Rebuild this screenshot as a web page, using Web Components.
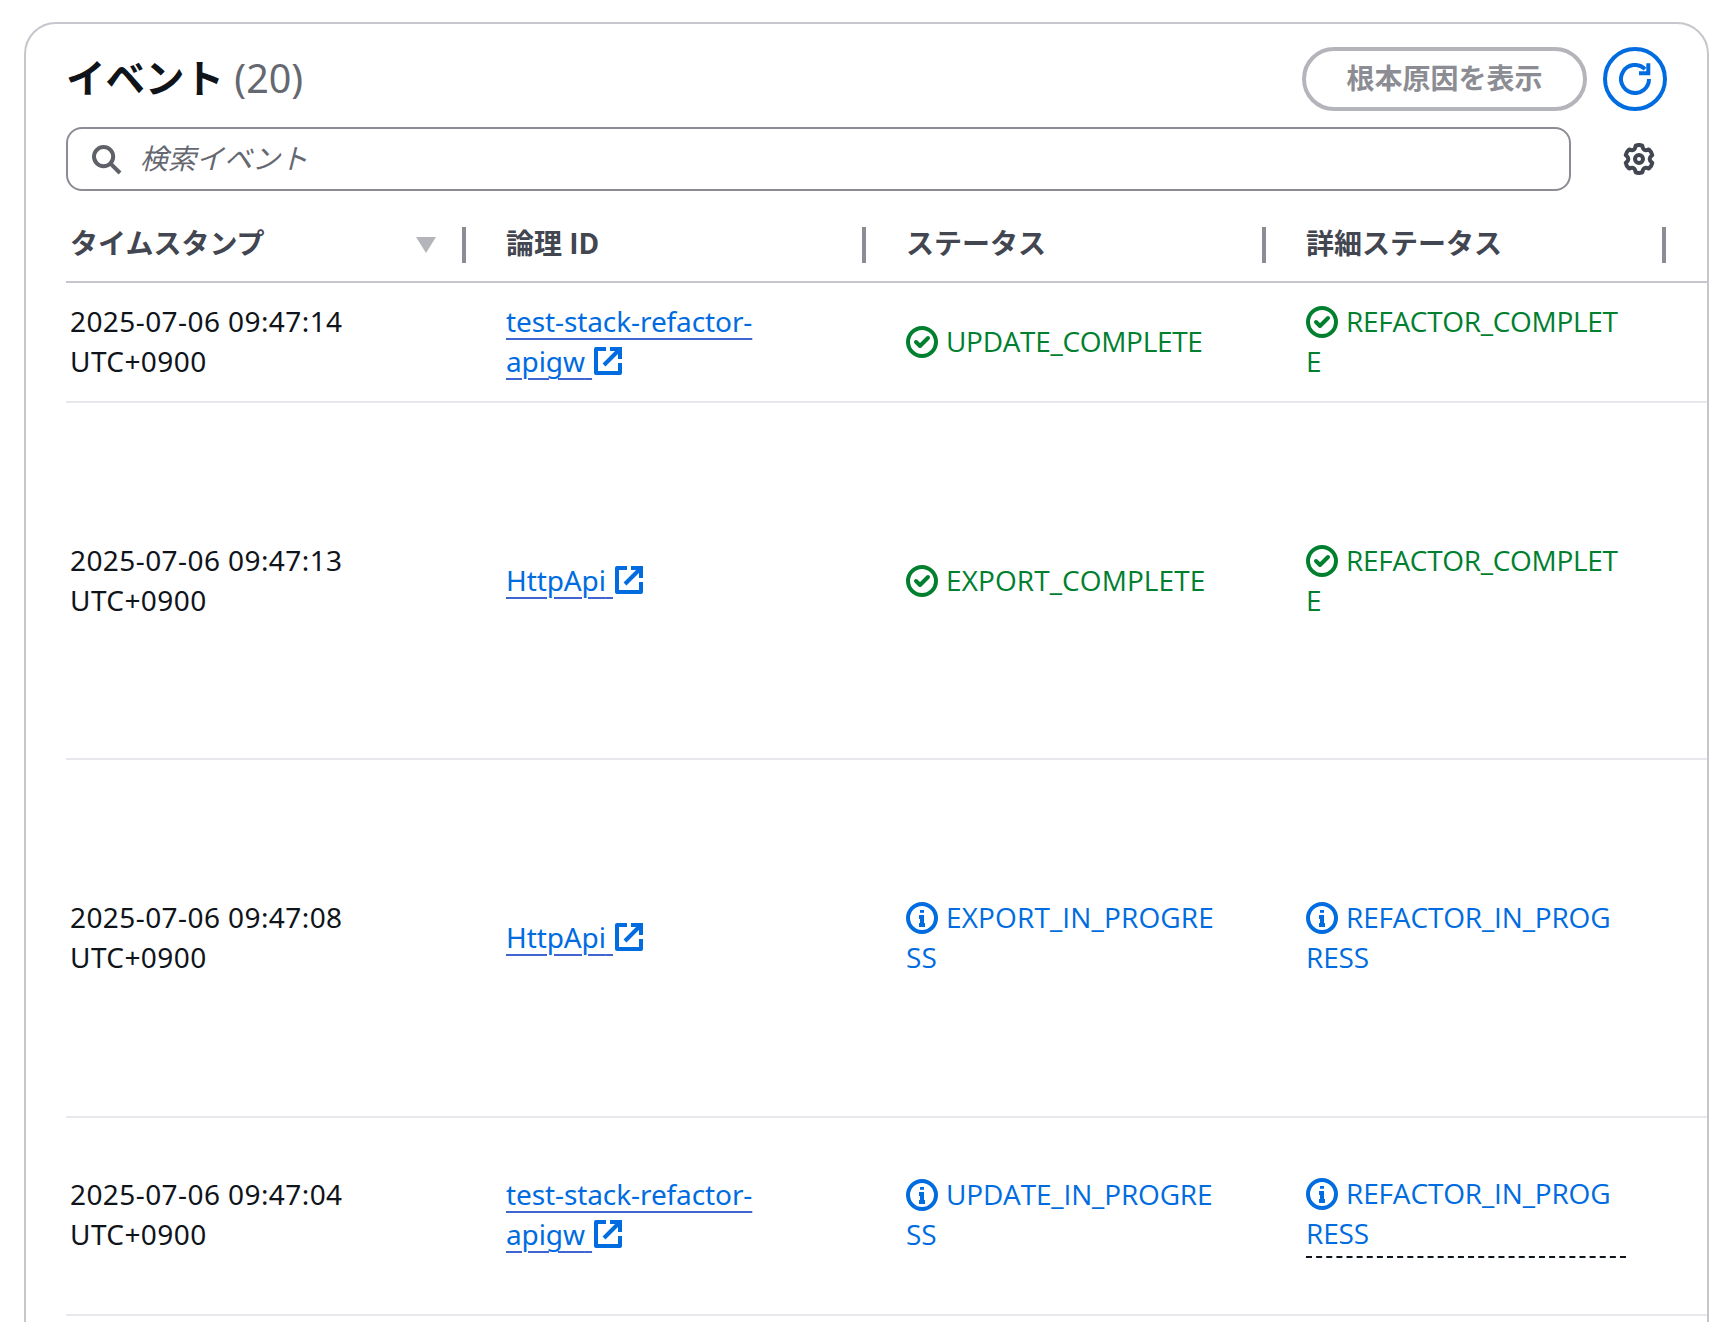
<!DOCTYPE html>
<html lang="ja">
<head>
<meta charset="utf-8">
<title>イベント</title>
<style>
	html, body {
		margin: 0;
		height: 1322px;
		overflow: hidden;
		background: #fff;
	}
	body {
		padding: 22px 24px 0 24px;
		box-sizing: border-box;
		font-family: "Noto Sans", "Noto Sans CJK JP", sans-serif;
	}
</style>
</head>
<body>
<ev-panel count="20">
	<ev-table>
		<ev-head>
			<ev-th first sorted>タイムスタンプ</ev-th>
			<ev-th>論理 ID</ev-th>
			<ev-th>ステータス</ev-th>
			<ev-th>詳細ステータス</ev-th>
		</ev-head>
		<ev-row height="118">
			<ev-cell first>2025-07-06 09:47:14 UTC+0900</ev-cell>
			<ev-cell><ev-link>test-stack-refactor-apigw</ev-link></ev-cell>
			<ev-cell><ev-status type="success" style="letter-spacing: -0.3px">UPDATE_COMPLETE</ev-status></ev-cell>
			<ev-cell><ev-status type="success" style="letter-spacing: -0.3px">REFACTOR_COMPLETE</ev-status></ev-cell>
		</ev-row>
		<ev-row height="355">
			<ev-cell first>2025-07-06 09:47:13 UTC+0900</ev-cell>
			<ev-cell><ev-link>HttpApi</ev-link></ev-cell>
			<ev-cell><ev-status type="success" style="letter-spacing: 0.1px">EXPORT_COMPLETE</ev-status></ev-cell>
			<ev-cell><ev-status type="success" style="letter-spacing: -0.3px">REFACTOR_COMPLETE</ev-status></ev-cell>
		</ev-row>
		<ev-row height="356">
			<ev-cell first>2025-07-06 09:47:08 UTC+0900</ev-cell>
			<ev-cell><ev-link>HttpApi</ev-link></ev-cell>
			<ev-cell><ev-status type="info" style="letter-spacing: 0.15px">EXPORT_IN_PROGRESS</ev-status></ev-cell>
			<ev-cell><ev-status type="info">REFACTOR_IN_PROGRESS</ev-status></ev-cell>
		</ev-row>
		<ev-row height="194" lift>
			<ev-cell first>2025-07-06 09:47:04 UTC+0900</ev-cell>
			<ev-cell><ev-link>test-stack-refactor-apigw</ev-link></ev-cell>
			<ev-cell><ev-status type="info">UPDATE_IN_PROGRESS</ev-status></ev-cell>
			<ev-cell><ev-status type="info" dashed>REFACTOR_IN_PROGRESS</ev-status></ev-cell>
		</ev-row>
	</ev-table>
</ev-panel>

<script>
const ICONS = {
	search: `<circle cx="6.8" cy="6.8" r="4.8"/><path stroke-linecap="butt" d="m15 15-4.6-4.6"/>`,
	refresh: `<path stroke-linecap="butt" d="M15 8a7 7 0 1 1-2-4.9"/><path stroke-linecap="butt" stroke-linejoin="miter" d="M14.65 .15v5H10"/>`,
	external: `<path stroke-linecap="square" stroke-linejoin="miter" d="M10 2h4v4"/><path stroke-linecap="butt" d="m6 10 8-8"/><path stroke-linecap="butt" d="M14 9v5H2V2h5"/>`,
	success: `<circle cx="8" cy="8" r="7"/><path d="m5 8 2 2 4-4"/>`,
	info: `<circle cx="8" cy="8" r="7"/><path stroke-linecap="butt" stroke-linejoin="miter" d="M8 11.5V7.5H6.5"/><path stroke-linecap="butt" d="M6.5 11.5h3"/><path stroke-linecap="butt" d="M8 4v1.4"/>`
};

// six rounded teeth, one at the top
function gearPath() {
	const pt = (deg, r) => {
		const t = deg * Math.PI / 180;
		return (8 + r * Math.cos(t)).toFixed(2) + " " + (8 + r * Math.sin(t)).toFixed(2);
	};
	let d = "M" + pt(-104, 6.9);
	for (let i = 0; i < 6; i++) {
		const a = -90 + i * 60;
		d += "Q" + pt(a, 7.3) + " " + pt(a + 14, 6.9);
		d += "Q" + pt(a + 30, 4) + " " + pt(a + 46, 6.9);
	}
	return d + "Z";
}
ICONS.settings = `<path d="${gearPath()}"/><circle cx="8" cy="8" r="2"/>`;

function icon(name) {
	return `<svg viewBox="0 0 16 16" width="32" height="32" fill="none" stroke="currentColor" stroke-width="2" stroke-linecap="round" stroke-linejoin="round" aria-hidden="true">${ICONS[name]}</svg>`;
}

class EvPanel extends HTMLElement {
	constructor() {
		super();
		this.attachShadow({ mode: "open" });
		this.shadowRoot.innerHTML = `
<style>
	:host {
		display: block;
		box-sizing: border-box;
		width: 1685px;
		height: 1400px;
		padding: 23px 40px 0;
		border: 2px solid #c6c6cd;
		border-radius: 32px;
		overflow: hidden;
		color: #0f141a;
		font-size: 28px;
		line-height: 40px;
	}
	header {
		display: flex;
		align-items: center;
		gap: 16px;
		height: 64px;
	}
	h2 {
		flex: 1;
		margin: 0;
		padding-bottom: 2px;
		font-size: 39.5px;
		line-height: 48px;
		font-weight: 700;
	}
	h2 span {
		font-weight: 400;
		color: #656871;
	}
	button {
		box-sizing: border-box;
		height: 64px;
		padding: 0;
		background: #fff;
		border: 4px solid;
		border-radius: 32px;
		font: inherit;
		font-weight: 700;
		display: flex;
		align-items: center;
		justify-content: center;
	}
	#cause {
		width: 285px;
		padding-bottom: 2px;
		color: #8c8c94;
		border-color: #b4b4bb;
	}
	#refresh {
		width: 64px;
		color: #006ce0;
		border-color: #006ce0;
	}
	.tools {
		display: flex;
		align-items: center;
		margin-top: 16px;
	}
	.search {
		box-sizing: border-box;
		flex: 0 0 1505px;
		height: 64px;
		display: flex;
		align-items: center;
		gap: 18px;
		padding-left: 22px;
		border: 2px solid #8c8c94;
		border-radius: 16px;
		color: #5f6168;
	}
	.search em {
		padding-bottom: 2px;
		color: #656871;
		font-style: italic;
	}
	.gear {
		display: flex;
		margin-left: 52px;
		color: #424650;
	}
	svg {
		display: block;
	}
</style>
<header>
	<h2>イベント <span>(<span id="count"></span>)</span></h2>
	<button id="cause" disabled>根本原因を表示</button>
	<button id="refresh">${icon("refresh")}</button>
</header>
<div class="tools">
	<div class="search">${icon("search")}<em>検索イベント</em></div>
	<div class="gear">${icon("settings")}</div>
</div>
<slot></slot>
`;
		this.shadowRoot.querySelector("#count").textContent = this.getAttribute("count");
	}
}

class EvTable extends HTMLElement {
	constructor() {
		super();
		this.attachShadow({ mode: "open" });
		this.shadowRoot.innerHTML = `
<style>
	:host {
		display: block;
		margin-right: -40px;
	}
</style>
<slot></slot>
`;
	}
}

class EvHead extends HTMLElement {
	constructor() {
		super();
		this.attachShadow({ mode: "open" });
		this.shadowRoot.innerHTML = `
<style>
	:host {
		display: grid;
		grid-template-columns: repeat(4, 400px);
		padding: 36px 0 18px;
		border-bottom: 2px solid #c6c6cd;
	}
</style>
<slot></slot>
`;
	}
}

class EvTh extends HTMLElement {
	constructor() {
		super();
		this.attachShadow({ mode: "open" });
		const caret = this.hasAttribute("sorted")
			? `<svg width="22" height="18" viewBox="0 0 22 18"><path d="M1 1h20L11 17z" fill="#b4b4bb"/></svg>`
			: "";
		this.shadowRoot.innerHTML = `
<style>
	:host {
		display: flex;
		align-items: center;
		height: 36px;
		padding-left: 40px;
		color: #424650;
		font-family: "Open Sans", "Noto Sans CJK JP", sans-serif;
		font-weight: 700;
	}
	:host([first]) {
		padding-left: 4px;
	}
	span {
		flex: 1;
		padding-bottom: 4px;
	}
	i {
		width: 4px;
		height: 36px;
		margin-left: 25px;
		background: #8c8c94;
	}
</style>
<span><slot></slot></span>${caret}<i></i>
`;
	}
}

class EvRow extends HTMLElement {
	constructor() {
		super();
		this.attachShadow({ mode: "open" });
		this.shadowRoot.innerHTML = `
<style>
	:host {
		display: grid;
		grid-template-columns: repeat(4, 400px);
		align-items: center;
		min-height: ${this.getAttribute("height")}px;
		border-bottom: 2px solid #e8e8ec;
	}
	:host([lift]) {
		padding-bottom: 2px;
	}
</style>
<slot></slot>
`;
	}
}

class EvCell extends HTMLElement {
	constructor() {
		super();
		this.attachShadow({ mode: "open" });
		this.shadowRoot.innerHTML = `
<style>
	:host {
		display: block;
		padding: 0 40px 2px;
	}
	:host([first]) {
		padding: 0 100px 2px 4px;
		letter-spacing: 0.42px;
	}
</style>
<slot></slot>
`;
	}
}

class EvLink extends HTMLElement {
	constructor() {
		super();
		this.attachShadow({ mode: "open" });
		this.shadowRoot.innerHTML = `
<style>
	:host {
		display: block;
		color: #006ce0;
		letter-spacing: -0.1px;
	}
	a {
		color: inherit;
		text-decoration: underline 2px;
		text-decoration-color: #4065d0;
		text-underline-offset: 6px;
	}
	svg {
		display: inline-block;
		vertical-align: top;
		margin-top: 4px;
	}
</style>
<a href="#"><slot></slot> </a>${icon("external")}
`;
	}
}

class EvStatus extends HTMLElement {
	constructor() {
		super();
		this.attachShadow({ mode: "open" });
		const type = this.getAttribute("type");
		this.shadowRoot.innerHTML = `
<style>
	:host {
		display: block;
		word-break: break-all;
		font-family: "Open Sans", sans-serif;
		letter-spacing: -0.15px;
		color: ${type === "success" ? "#00802f" : "#006ce0"};
	}
	:host([dashed]) {
		padding-bottom: 3px;
		margin-bottom: -3px;
		border-bottom: 2px dashed #0f141a;
	}
	svg {
		display: inline-block;
		vertical-align: top;
		margin: 5px 8px 0 0;
	}
</style>
${icon(type)}<slot></slot>
`;
	}
}

customElements.define("ev-panel", EvPanel);
customElements.define("ev-table", EvTable);
customElements.define("ev-head", EvHead);
customElements.define("ev-th", EvTh);
customElements.define("ev-row", EvRow);
customElements.define("ev-cell", EvCell);
customElements.define("ev-link", EvLink);
customElements.define("ev-status", EvStatus);
</script>
</body>
</html>
